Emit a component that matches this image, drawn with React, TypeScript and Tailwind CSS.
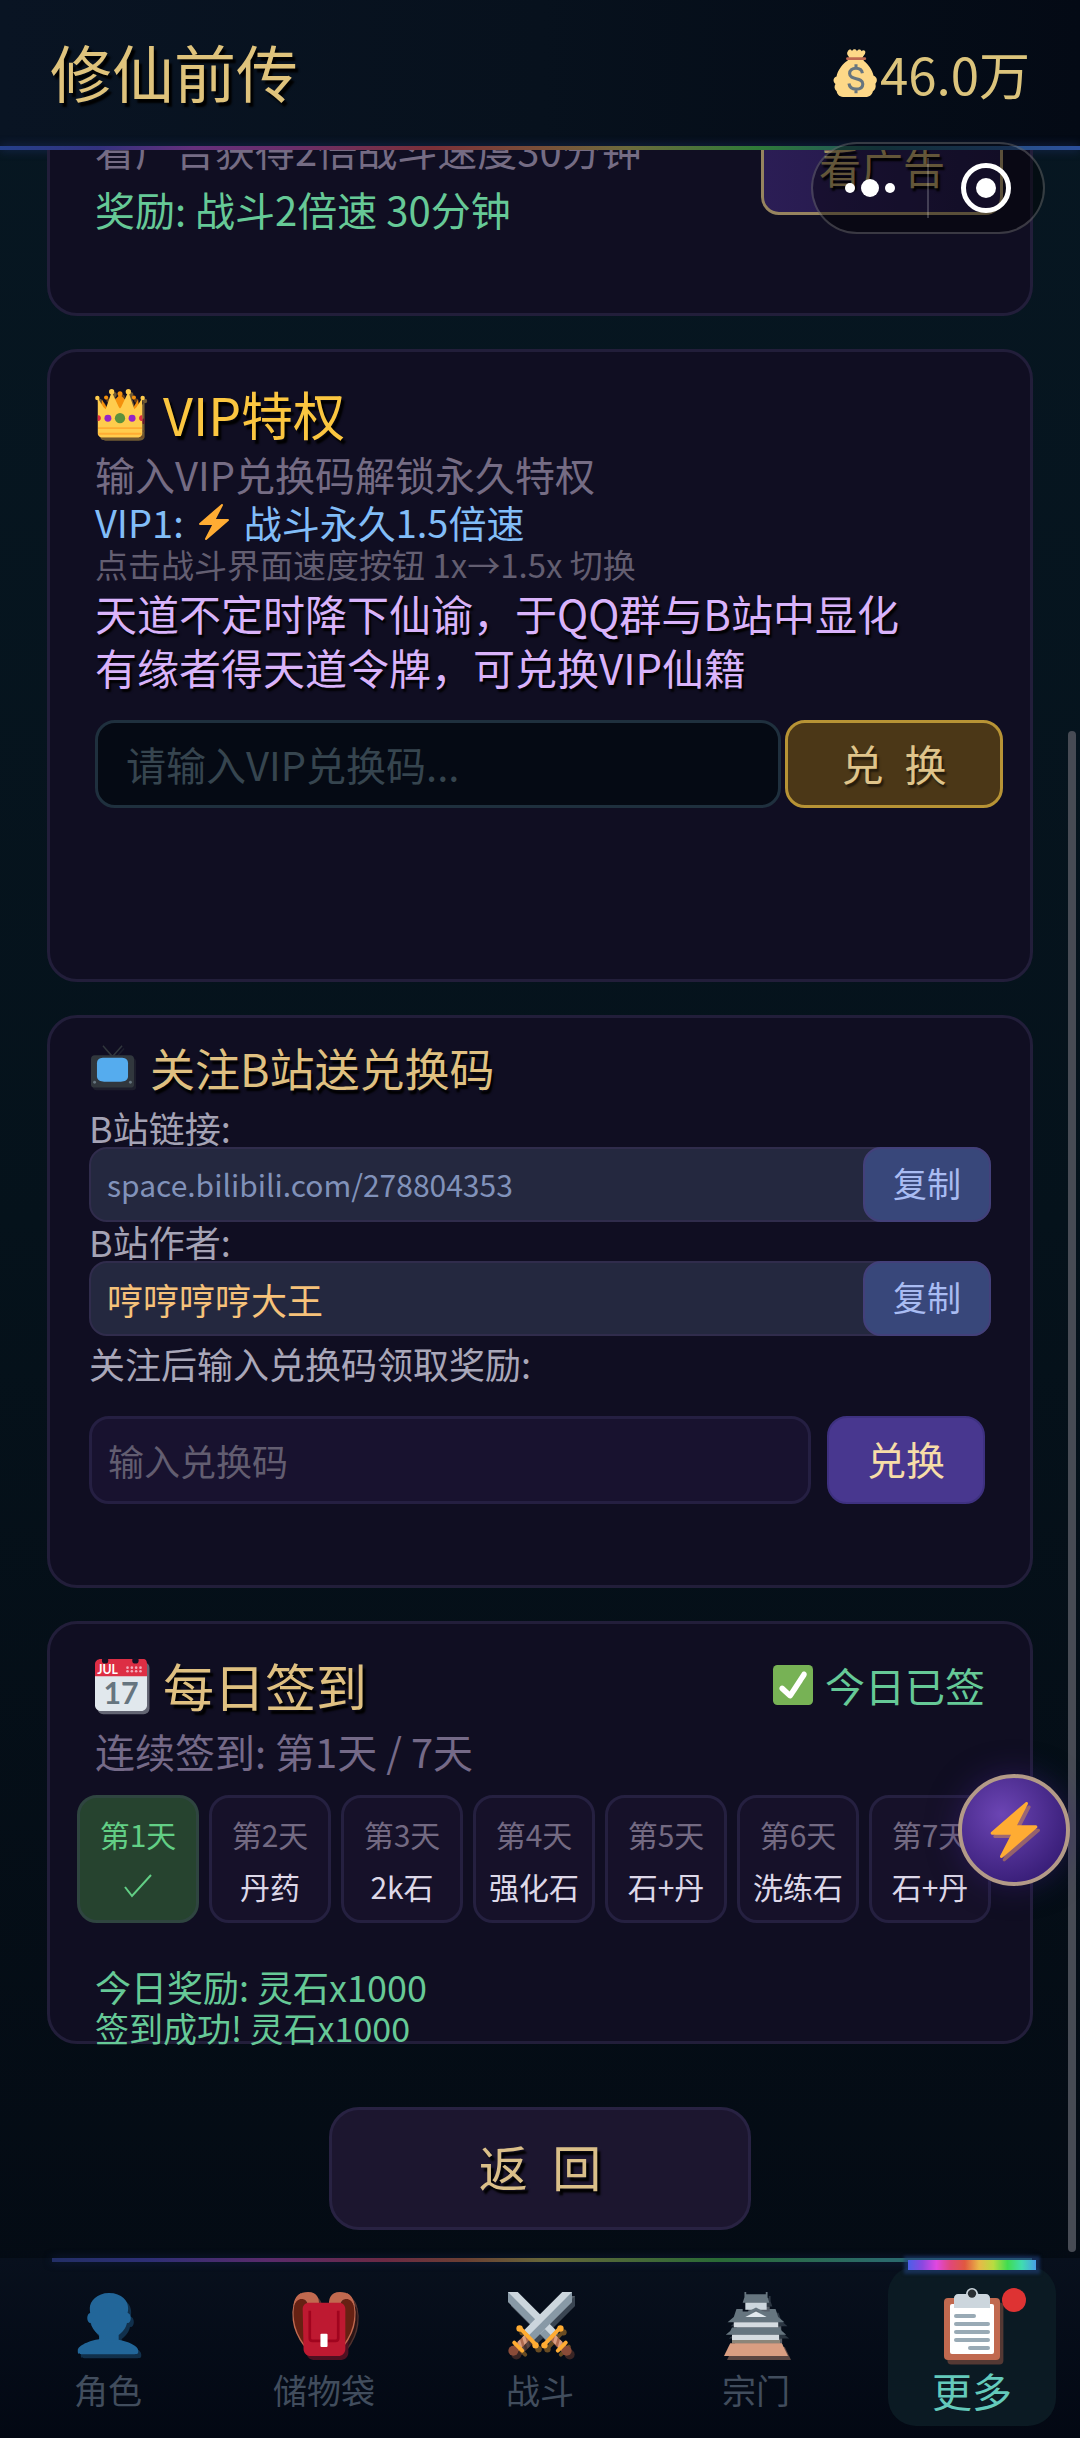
import type { ReactNode } from "react";

type EmojiProps = { className: string; flat?: boolean; shadow?: ReactNode; children: ReactNode };

function Emoji({ className, flat, shadow, children }: EmojiProps) {
	return (
		<svg
			viewBox="0 0 36 36"
			aria-hidden="true"
			className={`shrink-0 overflow-visible [text-shadow:none] ${className}`}
		>
			{!flat && (
				<g opacity="0.4" transform="translate(1.7 2.2)">
					{shadow ?? children}
				</g>
			)}
			{children}
		</svg>
	);
}

const moneyBag = (
	<>
		<path
			fill="#FDD888"
			d="M12 1.5c1-1.6 2.600-1.400 3 .2.700-1.900 3-1.900 3.700-.1.700-1.700 3-1.700 3.500.1.900-1.300 3-.9 2.800.9-.2 1.500-1.600 2.600-2.300 3.900L24 9c3 2.300 6.200 6.500 7.200 11 2.700 1 3.200 3.800 1.400 6 .600 2.600-.2 4.500-1.900 5.600C30.200 34.500 27.500 36 25 36H9.500c-3.200 0-5.700-1.500-6-4.400-1.900-1.400-2-3.700-.9-5.300C.400 24.300.800 21.500 3.400 20.600 4 16 8.500 10.500 11.600 8.800l1.200-2.600C12 4.800 10.500 3.500 12 1.500z"
		/>
		<path fill="#BF6952" d="M11.600 6.200h13c1.400 0 1.400 2.100 0 2.100h-13c-1.400 0-1.400-2.100 0-2.100z" />
		<path
			fill="none"
			stroke="#67757F"
			strokeWidth="2.300"
			d="M22.800 18.200c-.4-2.800-2.300-3.700-4.800-3.700-3 0-4.800 1.400-4.800 3.900 0 5.400 9.900 2.400 9.900 7.800 0 2.600-2.100 3.900-5 3.900-3.200 0-5-1.400-5.400-4.200M18 11.500v4M18 29.500v3.700"
		/>
	</>
);

const crown = (
	<>
		<path fill="#F4900C" d="M5 7.500l3.500 6L18 4l9.500 9.500 3.500-6 1.500 12h-29z" />
		<circle cx="18" cy="3.500" r="1.800" fill="#F4900C" />
		<circle cx="8" cy="6.200" r="1.500" fill="#F4900C" />
		<circle cx="28" cy="6.200" r="1.500" fill="#F4900C" />
		<path
			fill="#FFCC4D"
			d="M2 32V6.500L6 13l1.700 1.500L12 2l5.200 11.200.8.800.8-.8L24 2l4.300 12.500L30 13l4-6.500V32c0 2-2 3-4 3H6c-2 0-4-1-4-3z"
		/>
		<circle cx="12" cy="1.900" r="1.900" fill="#FFCC4D" />
		<circle cx="24" cy="1.900" r="1.900" fill="#FFCC4D" />
		<circle cx="1.700" cy="6.500" r="1.600" fill="#FFCC4D" />
		<circle cx="34.300" cy="6.500" r="1.600" fill="#FFCC4D" />
		<circle cx="18" cy="21" r="3.700" fill="#5C913B" />
		<circle cx="9.300" cy="21" r="2.500" fill="#9524C7" />
		<circle cx="26.700" cy="21" r="2.500" fill="#9524C7" />
		<path fill="#DD2E44" d="M2 19c3-.6 3 4.600 0 4zM34 19c-3-.6-3 4.600 0 4z" />
		<path fill="#FFAC33" d="M2.200 27.500h31.600v1.300H2.200zM2.500 31.500h31v1.500h-31z" />
	</>
);

const bolt = (
	<path
		fill="#FFAC33"
		d="M32.938 15.651C32.792 15.260 32.418 15 32 15H19.925L26.890 1.458c.219-.426.106-.947-.271-1.243C26.437.071 26.218 0 26 0c-.233 0-.466.082-.653.243L18 6.588 3.347 19.243c-.316.273-.43.714-.284 1.105S3.582 21 4 21h12.075L9.110 34.542c-.219.426-.106.947.271 1.243.182.144.401.215.619.215.233 0 .466-.082.653-.243L18 29.412l14.653-12.655c.317-.273.43-.714.285-1.106z"
	/>
);

const television = (
	<>
		<path fill="none" stroke="#31373D" strokeWidth="1.200" d="M10 -1l8 9 8-9" />
		<path fill="#31373D" d="M36 31.500c0 1.700-1.300 2.500-3 2.500H3c-1.700 0-3-.8-3-2.500V10c0-1.700 1.300-3 3-3h30c1.700 0 3 1.300 3 3z" />
		<path fill="#55ACEE" d="M31 24.500C31 28 28 29 25 29H11c-3 0-6-1-6-4.500v-11C5 10 8 9 11 9h14c3 0 6 1 6 4.500z" />
		<circle cx="3" cy="29.500" r="1.200" fill="#66757F" />
		<circle cx="33" cy="29.500" r="1.200" fill="#66757F" />
	</>
);

const calendar = (
	<>
		<path fill="#E1E8ED" d="M36 32c0 2.200-1.800 4-4 4H4c-2.200 0-4-1.800-4-4V8h36z" />
		<path fill="#DD2E44" d="M34 0H4C1.800 0 0 1.500 0 3.500V12h36V3.500C36 1.500 35.200 0 34 0z" />
		<circle cx="7" cy="1" r="2.200" fill="#141024" />
		<circle cx="28" cy="1" r="2.200" fill="#141024" />
		<g fill="#F4ABBA">
			{[22.500, 25.500, 28.500, 31.500].map((x) =>
				[6, 8.500].map((y) => <circle key={`${x}-${y}`} cx={x} cy={y} r="0.900" />),
			)}
		</g>
		<text x="1.500" y="10.500" fontSize="8.500" fontWeight="700" fill="#fff" fontFamily="Lato, sans-serif">
			JUL
		</text>
		<text x="18" y="31" fontSize="21" fontWeight="700" fill="#66757F" textAnchor="middle" fontFamily="Lato, sans-serif">
			17
		</text>
	</>
);

const calendarShadow = <rect width="36" height="36" rx="4" fill="#E1E8ED" />;

const checkMark = (
	<>
		<rect width="36" height="36" rx="4" fill="#77B255" />
		<path
			fill="#fff"
			d="M29.280 6.362c-1.156-.751-2.704-.422-3.458.736L14.936 23.877l-5.029-4.650c-1.014-.938-2.596-.875-3.533.138-.937 1.014-.875 2.596.139 3.533l7.209 6.666c.48.445 1.090.665 1.696.665.673 0 1.534-.282 2.099-1.139.332-.506 12.500-19.270 12.500-19.270.751-1.159.421-2.707-.737-3.458z"
		/>
	</>
);

const person = (
	<path
		fill="#226699"
		d="M24 26.799v-2.566c2-1.348 4.080-3.779 4.703-6.896.186.103.206.170.413.170.991 0 1.709-1.287 1.709-2.873 0-1.562-.823-2.827-1.794-2.865.187-.674.293-1.577.293-2.735C29.324 5.168 26 .527 18.541.527c-6.629 0-10.777 4.641-10.777 8.507 0 1.123.069 2.043.188 2.755-.911.137-1.629 1.352-1.629 2.845 0 1.587.804 2.873 1.796 2.873.206 0 .025-.067.209-.170C8.952 20.453 11 22.885 13 24.232v2.414c-5 .645-12 3.437-12 6.230v1.061C1 35 2.076 35 3.137 35h29.725C33.924 35 35 35 35 33.938v-1.061c0-2.615-6-5.225-11-6.078z"
	/>
);

const backpack = (
	<>
		<path fill="#662113" d="M5 1.500C1.500 4 .2 10 1 16c.6 5 3 10 6 14l3-22zM31 1.500c3.500 2.500 4.800 8.500 4 14.500-.6 5-3 10-6 14L26 8z" />
		<path
			fill="none"
			stroke="#C1694F"
			strokeWidth="0.800"
			d="M5 1C1.200 4 0 10 .8 16c.6 5 3 10 6 14M31 1c3.800 3 5 9 4.200 15-.6 5-3 10-6 14"
		/>
		<path
			fill="#C1694F"
			d="M9 0C4.500 0 1.300 2 .8 8c1.500-3 3-4.300 5.200-4 2.400.4 3 2.500 2.800 5H15C15.800 4 14.500 0 9 0zM27 0c4.500 0 7.700 2 8.200 8-1.500-3-3-4.300-5.200-4-2.400.4-3 2.500-2.800 5H21C20.200 4 21.500 0 27 0z"
		/>
		<path fill="#BE1931" d="M30 32c0 2.200-1.800 4-4 4H10.500c-2.200 0-4-1.800-4-4L6 9.500C6 7.500 7.500 6 9.500 6h17C28.500 6 30 7.500 30 9.500z" />
		<path fill="none" stroke="#A0041E" strokeWidth="1.500" d="M10 10.500V26c0 1 .6 1.500 1.500 1.500h13c1 0 1.500-.6 1.500-1.500V10.500" />
		<rect x="16" y="23.500" width="4" height="7.500" rx="0.600" fill="#fff" />
	</>
);

function Sword() {
	return (
		<>
			<path fill="#CCD6DD" d="M36 0v5.500L14.500 27 9 21.500 30.500 0z" />
			<path fill="#8899A6" d="M36 0v5.500L14.500 27l-2.700-2.700z" />
			<path fill="#AF6A4F" d="M10.500 23l2.800 2.800-8 8-2.800-2.800z" />
			<path fill="#D99E82" d="M8 25.500l1.400-1.400 1.200 4.200-1.400 1.400zM5.500 28l1.300-1.300L8 31l-1.400 1.400z" />
			<circle cx="3" cy="33" r="2.800" fill="#8A4B38" />
			<path fill="none" stroke="#FFAC33" strokeWidth="2.200" strokeLinecap="round" d="M7.500 21l8 8.500M3.500 28.500l4.500 4.500" />
			<circle cx="6.500" cy="20.500" r="1.800" fill="#FFAC33" />
			<circle cx="15.500" cy="30" r="1.800" fill="#FFAC33" />
		</>
	);
}

const swords = (
	<>
		<g transform="matrix(-1 0 0 1 36 0)">
			<Sword />
		</g>
		<Sword />
	</>
);

const castle = (
	<>
		<path fill="#66757F" d="M11.500 0h1v1.200h11V0h1v3l1 3h-15l1-3z" />
		<path fill="#CCD6DD" d="M12 6h12v4H12z" />
		<path fill="#66757F" d="M7 9.500h3.500V11h15V9.500H29l1.500 4.500L34 17H2l3.500-3z" />
		<path fill="#E1E8ED" d="M12 14l6-3 6 3z" />
		<path fill="none" stroke="#66757F" strokeWidth="1.500" d="M10.500 13.500L18 9.500l7.500 4" />
		<path fill="#D5DBE0" d="M5.500 17h25v3h-25z" />
		<path fill="#66757F" d="M4.500 20h27l1 2 2.500 2H1l2.500-2z" />
		<path fill="#D5DBE0" d="M4.500 24h26.500v3H4.500z" />
		<path fill="#8C8579" d="M4.500 27h27v1.800h-27z" />
		<path fill="#D99E82" d="M3.500 28.800h29L36 36H0z" />
	</>
);

const clipboard = (
	<>
		<rect x="4" y="5" width="28" height="31" rx="2" fill="#C1694F" />
		<rect x="7" y="8" width="22" height="25" rx="1" fill="#fff" />
		<circle cx="18" cy="3" r="3" fill="#CCD6DD" />
		<path fill="#CCD6DD" d="M27 10H9V5c0-1.100.9-2 2-2h14c1.100 0 2 .9 2 2z" />
		<circle cx="18" cy="2.800" r="2.100" fill="#292F33" />
		<g fill="#99AAB5">
			<rect x="9" y="13" width="11" height="2" rx="1" />
			<rect x="9" y="17" width="18" height="2" rx="1" />
			<rect x="9" y="21" width="18" height="2" rx="1" />
			<rect x="9" y="25" width="18" height="2" rx="1" />
			<rect x="16" y="29" width="11" height="2" rx="1" />
		</g>
	</>
);

const days = [
	{ label: "第1天", reward: "", done: true },
	{ label: "第2天", reward: "丹药" },
	{ label: "第3天", reward: "2k石" },
	{ label: "第4天", reward: "强化石" },
	{ label: "第5天", reward: "石+丹" },
	{ label: "第6天", reward: "洗练石" },
	{ label: "第7天", reward: "石+丹" },
];

const tabs = [
	{ label: "角色", icon: person },
	{ label: "储物袋", icon: backpack },
	{ label: "战斗", icon: swords },
	{ label: "宗门", icon: castle },
	{ label: "更多", icon: clipboard, active: true },
];

function Card({ className, children }: { className: string; children: ReactNode }) {
	return (
		<section className={`rounded-[30px] border-3 border-[#221e3a] bg-[#100e22] ${className}`}>{children}</section>
	);
}

function CopyRow({ label, value, valueClass }: { label: string; value: string; valueClass: string }) {
	return (
		<div>
			<p className="text-[36px] leading-[39px] text-[#a5a3b5]">{label}</p>
			<div className="flex h-[75px] items-stretch rounded-[18px] border-2 border-[#302c4c] bg-[#24283f]">
				<span className={`flex-1 self-center pl-4 ${valueClass}`}>{value}</span>
				<button className="-my-0.5 -mr-0.5 w-32 rounded-[18px] border-2 border-[#43407a] bg-[#38477a] pb-1 text-[34px] text-[#a9bcf2]">
					复制
				</button>
			</div>
		</div>
	);
}

function Header() {
	return (
		<header className="shrink-0">
			<div className="flex h-[146px] items-center justify-between bg-linear-to-r from-[#091423] via-[#07111d] to-[#040a15] px-[50px]">
				<h1 className="pb-1 text-[62px] leading-none text-[#dfc37c] [text-shadow:3px_4px_2px_#000]">修仙前传</h1>
				<div className="flex items-center text-[51px] leading-none text-[#dcc47c]">
					<Emoji flat className="size-12">
						{moneyBag}
					</Emoji>
					46.0万
				</div>
			</div>
			<div className="h-1 bg-[linear-gradient(90deg,#25408a_0%,#33327f_9%,#66307c_18%,#6b2e6a_27%,#7c3038_40%,#7a4f38_50%,#6d6a3c_58%,#2f7a38_70%,#1f5060_82%,#2c4f9c_100%)] shadow-[0_0_10px_#1d2f63]" />
		</header>
	);
}

function SpeedCard() {
	return (
		<Card className="pt-24 pr-[27px] pb-[74px] pl-[45px]">
			<div className="flex items-start justify-between">
				<div className="pt-2">
					<p className="text-[40px] leading-[60px] text-[#756c84]">看广告获得2倍战斗速度30分钟</p>
					<p className="text-[40px] leading-[60px] text-[#66c997]">奖励: 战斗2倍速 30分钟</p>
				</div>
				<button className="mt-2 h-24 w-[242px] rounded-[18px] border-3 border-[#97845f] bg-linear-to-r from-[#2b1d55] to-[#1f1740] pb-1 text-[42px] text-[#a58f60] [text-shadow:2px_3px_2px_#000]">
					看广告
				</button>
			</div>
		</Card>
	);
}

function VipCard() {
	return (
		<Card className="pt-[30px] pr-[27px] pb-[171px] pl-[45px]">
			<h2 className="flex items-center gap-[18px] text-[52px] leading-[64px] text-[#fbc640] [text-shadow:3px_4px_2px_#000]">
				<Emoji className="size-[50px]">{crown}</Emoji>
				VIP特权
			</h2>
			<p className="mt-1 text-[40px] leading-12 text-[#756c84]">输入VIP兑换码解锁永久特权</p>
			<p className="flex items-center text-[38px] leading-12 text-[#82bdf8]">
				VIP1:
				<Emoji flat className="mx-3 size-9">
					{bolt}
				</Emoji>
				战斗永久1.5倍速
			</p>
			<p className="text-[33px] leading-9 text-[#635e71]">点击战斗界面速度按钮 1x→1.5x 切换</p>
			<p className="mt-1 text-[42px] leading-[54px] text-[#d9b3fa] [text-shadow:2px_3px_2px_#000]">
				天道不定时降下仙谕，于QQ群与B站中显化
				<br />
				有缘者得天道令牌，可兑换VIP仙籍
			</p>
			<form className="mt-[26px] flex gap-1" onSubmit={(e) => e.preventDefault()}>
				<input
					aria-label="VIP兑换码"
					placeholder="请输入VIP兑换码..."
					className="h-[88px] min-w-0 flex-1 rounded-[20px] border-3 border-[#1f303e] bg-[#050a14] px-7 text-[40px] text-[#dfc37c] placeholder:text-[#36454f]"
				/>
				<button className="h-[88px] w-[218px] rounded-[20px] border-3 border-[#b79335] bg-[#4b3717] pb-1 text-[42px] text-[#dfc48a] [text-shadow:2px_3px_2px_#0008]">
					兑{"\u2002"}换
				</button>
			</form>
		</Card>
	);
}

function FollowCard() {
	return (
		<Card className="px-[39px] pt-[18px] pb-[81px]">
			<h2 className="flex items-center gap-4 text-[45px] leading-[64px] text-[#dfc081] [text-shadow:2px_4px_2px_#000]">
				<Emoji className="ml-0.5 size-[43px]">{television}</Emoji>
				关注B站送兑换码
			</h2>
			<div className="mt-2 flex flex-col">
				<CopyRow label="B站链接:" value="space.bilibili.com/278804353" valueClass="text-[30px] text-[#8192ba]" />
				<CopyRow label="B站作者:" value="哼哼哼哼大王" valueClass="text-[36px] text-[#f6c27a]" />
			</div>
			<label htmlFor="redeem" className="mt-2 block text-[36px] leading-[38px] text-[#a9a7b9]">
				关注后输入兑换码领取奖励:
			</label>
			<form className="mt-[34px] mr-1.5 flex gap-4" onSubmit={(e) => e.preventDefault()}>
				<input
					id="redeem"
					placeholder="输入兑换码"
					className="h-[88px] min-w-0 flex-1 rounded-[20px] border-3 border-[#251f42] bg-[#18122f] px-4 text-[36px] text-[#dfc37c] placeholder:text-[#625d70]"
				/>
				<button className="h-[88px] w-[158px] rounded-[20px] border-2 border-[#3e3180] bg-[#48378f] pb-1 text-[39px] text-[#f7dda8]">
					兑换
				</button>
			</form>
		</Card>
	);
}

function SignInCard() {
	return (
		<Card className="pt-[29px] pl-[45px]">
			<div className="flex items-center justify-between pr-[45px]">
				<h2 className="flex items-center gap-4 text-[51px] leading-[64px] text-[#dfc081] [text-shadow:3px_4px_2px_#000]">
					<Emoji className="size-[52px]" shadow={calendarShadow}>
						{calendar}
					</Emoji>
					每日签到
				</h2>
				<p className="flex items-center gap-3 text-[40px] leading-12 text-[#66c997]">
					<Emoji flat className="size-10">
						{checkMark}
					</Emoji>
					今日已签
				</p>
			</div>
			<p className="mt-2.5 text-[40px] leading-12 text-[#756a88]">连续签到: 第1天 / 7天</p>
			<ul className="mt-5 mr-[39px] -ml-[18px] flex gap-2.5">
				{days.map((day) => (
					<li
						key={day.label}
						className={`flex h-32 min-w-0 flex-1 flex-col items-center gap-1 rounded-[20px] border-3 pt-3 text-[30px] leading-12 ${
							day.done
								? "border-[#2f4540] bg-[#26432f] text-[#62cf85]"
								: "border-[#252040] bg-[#161129] text-[#ddd8e8]"
						}`}
					>
						<span className={day.done ? "" : "text-[#736a82]"}>{day.label}</span>
						{day.done ? (
							<svg viewBox="0 0 28 24" role="img" aria-label="✓" className="my-3 h-6 w-7">
								<path d="M1 13l7 9L27 1" fill="none" stroke="currentColor" strokeWidth="2" />
							</svg>
						) : (
							<span className="whitespace-nowrap">{day.reward}</span>
						)}
					</li>
				))}
			</ul>
			<p className="mt-[42px] text-[36px] leading-[42px] text-[#66c997]">今日奖励: 灵石x1000</p>
			{/* the toast line hangs over the card's lower edge */}
			<p className="-mb-2 text-[34px] leading-[42px] text-[#66c997]">签到成功! 灵石x1000</p>
		</Card>
	);
}

function TabBar() {
	return (
		<nav className="relative flex shrink-0 bg-linear-to-b from-[#08101d] to-[#030813] px-6 pt-2 pb-3">
			<div className="absolute top-0 right-12 left-13 h-1 bg-[linear-gradient(90deg,#232f66_0%,#2e2f75_10%,#5a2b6b_22%,#6c2a44_34%,#6b3f33_42%,#67663a_50%,#2a6b36_68%,#2b6a6c_85%,#2b6a6c_100%)] shadow-[0_0_8px_#12203f]" />
			{tabs.map((tab) => (
				<a
					key={tab.label}
					href="#"
					className={`relative mr-12 flex flex-1 flex-col items-center rounded-[28px] pt-5 pb-3 last:mr-0 ${
						tab.active ? "bg-[#0b1a23] text-[40px] text-[#64cabb]" : "text-[34px] text-[#414d5d]"
					}`}
				>
					{tab.active && (
						<span className="absolute -top-1.5 h-2.5 w-32 bg-[linear-gradient(90deg,#4a60e8,#8a48e0,#e048e0,#e04878,#e05840,#e8b848,#b8dc40,#40dc50,#40dcb0,#48a0e8)] shadow-[0_0_3px_4px_#1f3f7a90]" />
					)}
					<span className="relative flex h-[76px] items-center">
						<Emoji className={tab.active ? "size-[72px]" : "size-16"}>{tab.icon}</Emoji>
						{tab.active && <span className="absolute top-0.5 -right-[18px] size-6 rounded-full bg-[#de3333]" />}
					</span>
					<span className="mt-1 leading-12 whitespace-nowrap">{tab.label}</span>
				</a>
			))}
		</nav>
	);
}

export default function App() {
	return (
		<div className="relative flex h-screen flex-col overflow-hidden bg-linear-to-b from-[#071722] via-[#05121b] to-[#040a13] font-['Noto_Sans_CJK_SC',sans-serif]">
			<Header />

			{/* reversed column keeps the list scrolled to its end */}
			<main className="flex min-h-0 flex-1 flex-col-reverse overflow-y-auto [scrollbar-width:none]">
				<div className="flex flex-col gap-[33px] px-[47px] pb-7">
					<SpeedCard />
					<VipCard />
					<FollowCard />
					<SignInCard />
					<button className="mx-auto mt-[30px] h-[123px] w-[422px] rounded-[30px] border-3 border-[#282242] bg-[#1c162f] pb-1.5 text-[49px] text-[#dabf89] [text-shadow:3px_4px_2px_#000]">
						返{"\u2002"}回
					</button>
				</div>
			</main>

			<TabBar />

			<div className="absolute top-[30%] right-1 bottom-[186px] w-2 rounded-full bg-[#474b54]" />

			<div className="absolute top-[142px] right-[35px] flex h-[92px] w-[234px] rounded-full border-2 border-white/20 bg-black/40">
				<button aria-label="更多操作" className="flex flex-1 items-center justify-center gap-1.5">
					<span className="size-2.5 rounded-full bg-white" />
					<span className="size-[18px] rounded-full bg-white" />
					<span className="size-2.5 rounded-full bg-white" />
				</button>
				<span className="my-auto h-15 w-0.5 bg-white/20" />
				<button aria-label="关闭" className="flex flex-1 items-center justify-center">
					<span className="flex size-[50px] items-center justify-center rounded-full border-[5px] border-white">
						<span className="size-5 rounded-full bg-white" />
					</span>
				</button>
			</div>

			<button
				aria-label="加速"
				className="absolute right-[10px] bottom-[552px] flex size-28 items-center justify-center rounded-full border-4 border-[#b39a88] bg-[radial-gradient(circle_at_38%_35%,#6c45b4,#3a1f7a_75%)] shadow-[0_0_30px_#3a1f7a80]"
			>
				<Emoji className="size-14">{bolt}</Emoji>
			</button>
		</div>
	);
}
